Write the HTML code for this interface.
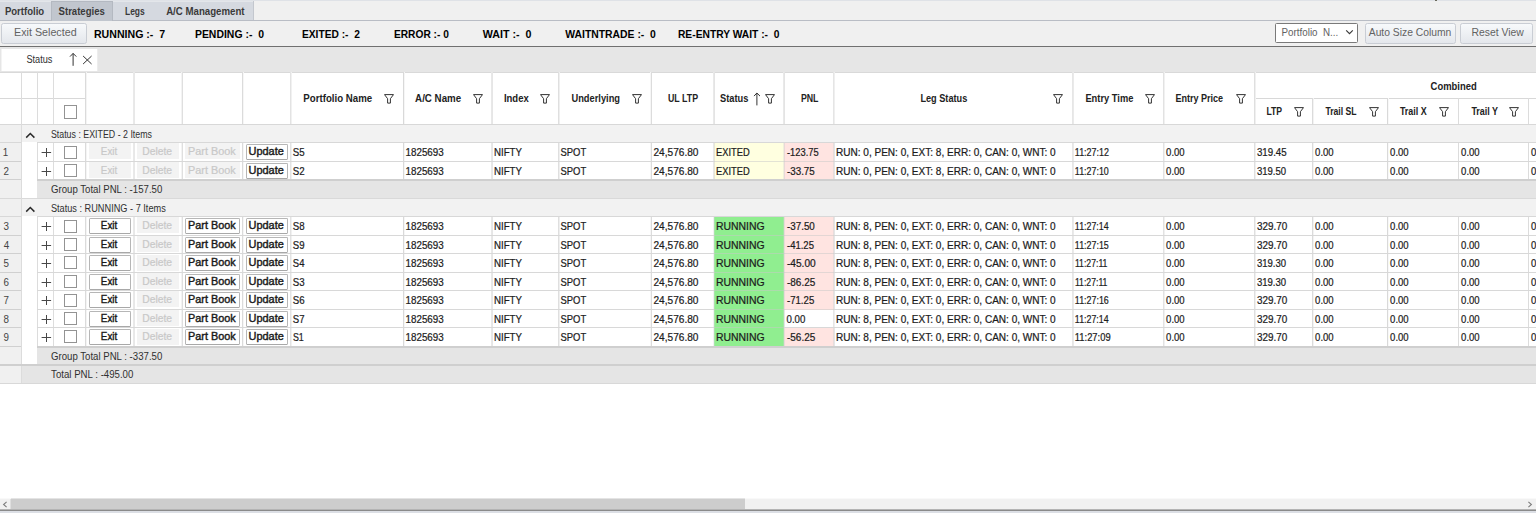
<!DOCTYPE html>
<html lang="en"><head><meta charset="utf-8"><title>Strategies</title><style>html,body{margin:0;padding:0}body{width:1536px;height:513px;overflow:hidden;background:#fff;position:relative;font-family:"Liberation Sans", sans-serif}body>div,body>span,body>svg{position:absolute;box-sizing:content-box}span{white-space:pre;line-height:16px;transform-origin:0 50%}.d{-webkit-text-stroke:0.22px currentColor}.gb{-webkit-text-stroke:0.4px currentColor}.gbd{-webkit-text-stroke:0.2px currentColor}.d{font-size:10.2px;font-weight:400;color:#1c1c1c}.h{font-size:10px;font-weight:700;color:#222222}.tab{font-size:10px;font-weight:700;color:#3a3a3a}.tb{font-size:10.8px;font-weight:700;color:#000000}.btn{font-size:10.6px;font-weight:400;color:#626262}.gb{font-size:10.4px;font-weight:400;color:#1a1a1a}.gbd{font-size:10.4px;font-weight:400;color:#c8c8c8}.g{font-size:10px;font-weight:400;color:#303030}.rn{font-size:10.2px;font-weight:400;color:#444444}</style></head><body>
<div style="left:0px;top:0px;width:1536px;height:21px;background:#f0f0f0;"></div>
<div style="left:0px;top:0px;width:1536px;height:1px;background:#dfe2e7;"></div>
<div style="left:0px;top:20px;width:1536px;height:1px;background:#b9bdc5;"></div>
<div style="left:0px;top:1px;width:254px;height:19px;background:#d5d9e0;"></div>
<div style="left:0px;top:1px;width:254px;height:1px;background:#e3e6ea;"></div>
<div style="left:51px;top:1px;width:62px;height:20px;background:#c1c6ce;"></div>
<div style="left:51px;top:1px;width:62px;height:1px;background:#b4b9c1;"></div>
<div style="left:51px;top:1px;width:1px;height:20px;background:#b4b9c1;"></div>
<div style="left:112px;top:1px;width:1px;height:20px;background:#b4b9c1;"></div>
<div style="left:253px;top:1px;width:1px;height:19px;background:#c3c7ce;"></div>
<div style="left:0px;top:21px;width:1536px;height:25px;background:#f0f0f0;"></div>
<div style="left:0px;top:46px;width:1536px;height:1px;background:#707070;"></div>
<div style="left:0px;top:47px;width:1536px;height:25px;background:#e6e6e6;"></div>
<div style="left:2px;top:49px;width:95px;height:22px;background:#ffffff;"></div>
<div style="left:1px;top:49px;width:1px;height:22px;background:#f3f3f3;"></div>
<div style="left:97px;top:49px;width:1px;height:22px;background:#ededed;"></div>
<div style="left:0px;top:72px;width:1536px;height:53px;background:#ffffff;"></div>
<div style="left:0px;top:124px;width:21px;height:19px;background:#f0f0f0;"></div>
<div style="left:21px;top:124px;width:1515px;height:19px;background:#f2f2f2;"></div>
<div style="left:0px;top:142px;width:21px;height:19px;background:#f0f0f0;"></div>
<div style="left:21px;top:142px;width:16px;height:19px;background:#ffffff;"></div>
<div style="left:37px;top:142px;width:1499px;height:19px;background:#ffffff;"></div>
<div style="left:88.5px;top:143px;width:42.0px;height:16px;background:#f3f3f3;"></div>
<div style="left:136.5px;top:143px;width:42.0px;height:16px;background:#f3f3f3;"></div>
<div style="left:185px;top:143px;width:54.5px;height:16px;background:#f3f3f3;"></div>
<div style="left:0px;top:161px;width:21px;height:19px;background:#f0f0f0;"></div>
<div style="left:21px;top:161px;width:16px;height:19px;background:#ffffff;"></div>
<div style="left:37px;top:161px;width:1499px;height:19px;background:#ffffff;"></div>
<div style="left:88.5px;top:162px;width:42.0px;height:16px;background:#f3f3f3;"></div>
<div style="left:136.5px;top:162px;width:42.0px;height:16px;background:#f3f3f3;"></div>
<div style="left:185px;top:162px;width:54.5px;height:16px;background:#f3f3f3;"></div>
<div style="left:37px;top:180px;width:1499px;height:19px;background:#e5e5e5;"></div>
<div style="left:0px;top:180px;width:21px;height:19px;background:#f0f0f0;"></div>
<div style="left:21px;top:180px;width:16px;height:19px;background:#ffffff;"></div>
<div style="left:0px;top:198px;width:21px;height:19px;background:#f0f0f0;"></div>
<div style="left:21px;top:198px;width:1515px;height:19px;background:#f2f2f2;"></div>
<div style="left:0px;top:216px;width:21px;height:19px;background:#f0f0f0;"></div>
<div style="left:21px;top:216px;width:16px;height:19px;background:#ffffff;"></div>
<div style="left:37px;top:216px;width:1499px;height:19px;background:#ffffff;"></div>
<div style="left:136.5px;top:217px;width:42.0px;height:16px;background:#f3f3f3;"></div>
<div style="left:0px;top:235px;width:21px;height:19px;background:#f0f0f0;"></div>
<div style="left:21px;top:235px;width:16px;height:19px;background:#ffffff;"></div>
<div style="left:37px;top:235px;width:1499px;height:19px;background:#ffffff;"></div>
<div style="left:136.5px;top:236px;width:42.0px;height:16px;background:#f3f3f3;"></div>
<div style="left:0px;top:254px;width:21px;height:19px;background:#f0f0f0;"></div>
<div style="left:21px;top:254px;width:16px;height:19px;background:#ffffff;"></div>
<div style="left:37px;top:254px;width:1499px;height:19px;background:#ffffff;"></div>
<div style="left:136.5px;top:255px;width:42.0px;height:16px;background:#f3f3f3;"></div>
<div style="left:0px;top:272px;width:21px;height:19px;background:#f0f0f0;"></div>
<div style="left:21px;top:272px;width:16px;height:19px;background:#ffffff;"></div>
<div style="left:37px;top:272px;width:1499px;height:19px;background:#ffffff;"></div>
<div style="left:136.5px;top:273px;width:42.0px;height:16px;background:#f3f3f3;"></div>
<div style="left:0px;top:290px;width:21px;height:19px;background:#f0f0f0;"></div>
<div style="left:21px;top:290px;width:16px;height:19px;background:#ffffff;"></div>
<div style="left:37px;top:290px;width:1499px;height:19px;background:#ffffff;"></div>
<div style="left:136.5px;top:291px;width:42.0px;height:16px;background:#f3f3f3;"></div>
<div style="left:0px;top:309px;width:21px;height:19px;background:#f0f0f0;"></div>
<div style="left:21px;top:309px;width:16px;height:19px;background:#ffffff;"></div>
<div style="left:37px;top:309px;width:1499px;height:19px;background:#ffffff;"></div>
<div style="left:136.5px;top:310px;width:42.0px;height:16px;background:#f3f3f3;"></div>
<div style="left:0px;top:328px;width:21px;height:19px;background:#f0f0f0;"></div>
<div style="left:21px;top:328px;width:16px;height:19px;background:#ffffff;"></div>
<div style="left:37px;top:328px;width:1499px;height:19px;background:#ffffff;"></div>
<div style="left:136.5px;top:329px;width:42.0px;height:16px;background:#f3f3f3;"></div>
<div style="left:37px;top:346px;width:1499px;height:19px;background:#e5e5e5;"></div>
<div style="left:0px;top:346px;width:21px;height:19px;background:#f0f0f0;"></div>
<div style="left:21px;top:346px;width:16px;height:19px;background:#ffffff;"></div>
<div style="left:21px;top:364px;width:1515px;height:19px;background:#e5e5e5;"></div>
<div style="left:0px;top:364px;width:21px;height:19px;background:#f0f0f0;"></div>
<div style="left:0px;top:498px;width:1536px;height:1px;background:#f9f9f9;"></div>
<div style="left:0px;top:499px;width:1536px;height:11px;background:#f1f1f1;"></div>
<div style="left:11px;top:498px;width:734px;height:1px;background:#e4e4e4;"></div>
<div style="left:11px;top:499px;width:734px;height:11px;background:#cdcdcd;"></div>
<div style="left:10px;top:499px;width:1px;height:11px;background:#dfdfdf;"></div>
<div style="left:0px;top:509px;width:1536px;height:1px;background:#b4b4b4;"></div>
<div style="left:0px;top:510px;width:1536px;height:1px;background:#8a8a8a;"></div>
<div style="left:0px;top:511px;width:1536px;height:2px;background:#dcdfe5;"></div>
<div style="left:1435px;top:0px;width:2px;height:1px;background:#6a6a5c;"></div>
<div style="left:0px;top:72px;width:1536px;height:1px;background:#d9d9d9;"></div>
<div style="left:0px;top:124px;width:1536px;height:1px;background:#d8d8d8;"></div>
<div style="left:0px;top:98px;width:85px;height:1px;background:#d8d8d8;"></div>
<div style="left:1254px;top:98px;width:282px;height:1px;background:#d8d8d8;"></div>
<div style="left:21px;top:72px;width:1px;height:52px;background:#dcdcdc;"></div>
<div style="left:37px;top:72px;width:1px;height:52px;background:#dcdcdc;"></div>
<div style="left:53px;top:72px;width:1px;height:52px;background:#dddddd;"></div>
<div style="left:85px;top:72px;width:1px;height:52px;background:#dbdbdb;"></div>
<div style="left:86px;top:72px;width:1px;height:52px;background:#f4f4f4;"></div>
<div style="left:133px;top:72px;width:1px;height:52px;background:#e9e9e9;"></div>
<div style="left:134px;top:72px;width:1px;height:52px;background:#e8e8e8;"></div>
<div style="left:181px;top:72px;width:1px;height:52px;background:#f3f3f3;"></div>
<div style="left:182px;top:72px;width:1px;height:52px;background:#dfdfdf;"></div>
<div style="left:242px;top:72px;width:1px;height:52px;background:#dbdbdb;"></div>
<div style="left:243px;top:72px;width:1px;height:52px;background:#f6f6f6;"></div>
<div style="left:290px;top:72px;width:1px;height:52px;background:#e3e3e3;"></div>
<div style="left:291px;top:72px;width:1px;height:52px;background:#f1f1f1;"></div>
<div style="left:403px;top:72px;width:1px;height:52px;background:#d9d9d9;"></div>
<div style="left:404px;top:72px;width:1px;height:52px;background:#f6f6f6;"></div>
<div style="left:491px;top:72px;width:1px;height:52px;background:#e8e8e8;"></div>
<div style="left:492px;top:72px;width:1px;height:52px;background:#e6e6e6;"></div>
<div style="left:558px;top:72px;width:1px;height:52px;background:#dfdfdf;"></div>
<div style="left:559px;top:72px;width:1px;height:52px;background:#efefef;"></div>
<div style="left:650px;top:72px;width:1px;height:52px;background:#f6f6f6;"></div>
<div style="left:651px;top:72px;width:1px;height:52px;background:#dcdcdc;"></div>
<div style="left:713px;top:72px;width:1px;height:52px;background:#e9e9e9;"></div>
<div style="left:714px;top:72px;width:1px;height:52px;background:#e4e4e4;"></div>
<div style="left:783px;top:72px;width:1px;height:52px;background:#e9e9e9;"></div>
<div style="left:784px;top:72px;width:1px;height:52px;background:#e4e4e4;"></div>
<div style="left:833px;top:72px;width:1px;height:52px;background:#e5e5e5;"></div>
<div style="left:834px;top:72px;width:1px;height:52px;background:#efefef;"></div>
<div style="left:1072px;top:72px;width:1px;height:52px;background:#e6e6e6;"></div>
<div style="left:1073px;top:72px;width:1px;height:52px;background:#eaeaea;"></div>
<div style="left:1163px;top:72px;width:1px;height:52px;background:#e2e2e2;"></div>
<div style="left:1164px;top:72px;width:1px;height:52px;background:#f1f1f1;"></div>
<div style="left:1254px;top:72px;width:1px;height:52px;background:#dfdfdf;"></div>
<div style="left:1255px;top:72px;width:1px;height:52px;background:#f0f0f0;"></div>
<div style="left:1312px;top:98px;width:1px;height:26px;background:#dbdbdb;"></div>
<div style="left:1313px;top:98px;width:1px;height:26px;background:#f3f3f3;"></div>
<div style="left:1387px;top:98px;width:1px;height:26px;background:#d9d9d9;"></div>
<div style="left:1388px;top:98px;width:1px;height:26px;background:#f8f8f8;"></div>
<div style="left:1458px;top:98px;width:1px;height:26px;background:#dcdcdc;"></div>
<div style="left:1528px;top:98px;width:1px;height:26px;background:#dcdcdc;"></div>
<div style="left:0px;top:142px;width:21px;height:1px;background:#d8d8d8;"></div>
<div style="left:37px;top:142px;width:1499px;height:1px;background:#d8d8d8;"></div>
<div style="left:0px;top:161px;width:21px;height:1px;background:#d0d0d0;"></div>
<div style="left:37px;top:161px;width:1499px;height:1px;background:#d8d8d8;"></div>
<div style="left:37px;top:143px;width:1px;height:18px;background:#dcdcdc;"></div>
<div style="left:53px;top:143px;width:1px;height:18px;background:#dddddd;"></div>
<div style="left:85px;top:143px;width:1px;height:18px;background:#dbdbdb;"></div>
<div style="left:86px;top:143px;width:1px;height:18px;background:#f4f4f4;"></div>
<div style="left:133px;top:143px;width:1px;height:18px;background:#e9e9e9;"></div>
<div style="left:134px;top:143px;width:1px;height:18px;background:#e8e8e8;"></div>
<div style="left:181px;top:143px;width:1px;height:18px;background:#f3f3f3;"></div>
<div style="left:182px;top:143px;width:1px;height:18px;background:#dfdfdf;"></div>
<div style="left:242px;top:143px;width:1px;height:18px;background:#dbdbdb;"></div>
<div style="left:243px;top:143px;width:1px;height:18px;background:#f6f6f6;"></div>
<div style="left:290px;top:143px;width:1px;height:18px;background:#e3e3e3;"></div>
<div style="left:291px;top:143px;width:1px;height:18px;background:#f1f1f1;"></div>
<div style="left:403px;top:143px;width:1px;height:18px;background:#d9d9d9;"></div>
<div style="left:404px;top:143px;width:1px;height:18px;background:#f6f6f6;"></div>
<div style="left:491px;top:143px;width:1px;height:18px;background:#e8e8e8;"></div>
<div style="left:492px;top:143px;width:1px;height:18px;background:#e6e6e6;"></div>
<div style="left:558px;top:143px;width:1px;height:18px;background:#dfdfdf;"></div>
<div style="left:559px;top:143px;width:1px;height:18px;background:#efefef;"></div>
<div style="left:650px;top:143px;width:1px;height:18px;background:#f6f6f6;"></div>
<div style="left:651px;top:143px;width:1px;height:18px;background:#dcdcdc;"></div>
<div style="left:713px;top:143px;width:1px;height:18px;background:#e9e9e9;"></div>
<div style="left:714px;top:143px;width:1px;height:18px;background:#e4e4e4;"></div>
<div style="left:783px;top:143px;width:1px;height:18px;background:#e9e9e9;"></div>
<div style="left:784px;top:143px;width:1px;height:18px;background:#e4e4e4;"></div>
<div style="left:833px;top:143px;width:1px;height:18px;background:#e5e5e5;"></div>
<div style="left:834px;top:143px;width:1px;height:18px;background:#efefef;"></div>
<div style="left:1072px;top:143px;width:1px;height:18px;background:#e6e6e6;"></div>
<div style="left:1073px;top:143px;width:1px;height:18px;background:#eaeaea;"></div>
<div style="left:1163px;top:143px;width:1px;height:18px;background:#e2e2e2;"></div>
<div style="left:1164px;top:143px;width:1px;height:18px;background:#f1f1f1;"></div>
<div style="left:1254px;top:143px;width:1px;height:18px;background:#dfdfdf;"></div>
<div style="left:1255px;top:143px;width:1px;height:18px;background:#f0f0f0;"></div>
<div style="left:1312px;top:143px;width:1px;height:18px;background:#dbdbdb;"></div>
<div style="left:1313px;top:143px;width:1px;height:18px;background:#f3f3f3;"></div>
<div style="left:1387px;top:143px;width:1px;height:18px;background:#d9d9d9;"></div>
<div style="left:1388px;top:143px;width:1px;height:18px;background:#f8f8f8;"></div>
<div style="left:1458px;top:143px;width:1px;height:18px;background:#dcdcdc;"></div>
<div style="left:1528px;top:143px;width:1px;height:18px;background:#dcdcdc;"></div>
<div style="left:0px;top:179px;width:21px;height:1px;background:#d0d0d0;"></div>
<div style="left:37px;top:179px;width:1499px;height:1px;background:#d8d8d8;"></div>
<div style="left:37px;top:162px;width:1px;height:17px;background:#dcdcdc;"></div>
<div style="left:53px;top:162px;width:1px;height:17px;background:#dddddd;"></div>
<div style="left:85px;top:162px;width:1px;height:17px;background:#dbdbdb;"></div>
<div style="left:86px;top:162px;width:1px;height:17px;background:#f4f4f4;"></div>
<div style="left:133px;top:162px;width:1px;height:17px;background:#e9e9e9;"></div>
<div style="left:134px;top:162px;width:1px;height:17px;background:#e8e8e8;"></div>
<div style="left:181px;top:162px;width:1px;height:17px;background:#f3f3f3;"></div>
<div style="left:182px;top:162px;width:1px;height:17px;background:#dfdfdf;"></div>
<div style="left:242px;top:162px;width:1px;height:17px;background:#dbdbdb;"></div>
<div style="left:243px;top:162px;width:1px;height:17px;background:#f6f6f6;"></div>
<div style="left:290px;top:162px;width:1px;height:17px;background:#e3e3e3;"></div>
<div style="left:291px;top:162px;width:1px;height:17px;background:#f1f1f1;"></div>
<div style="left:403px;top:162px;width:1px;height:17px;background:#d9d9d9;"></div>
<div style="left:404px;top:162px;width:1px;height:17px;background:#f6f6f6;"></div>
<div style="left:491px;top:162px;width:1px;height:17px;background:#e8e8e8;"></div>
<div style="left:492px;top:162px;width:1px;height:17px;background:#e6e6e6;"></div>
<div style="left:558px;top:162px;width:1px;height:17px;background:#dfdfdf;"></div>
<div style="left:559px;top:162px;width:1px;height:17px;background:#efefef;"></div>
<div style="left:650px;top:162px;width:1px;height:17px;background:#f6f6f6;"></div>
<div style="left:651px;top:162px;width:1px;height:17px;background:#dcdcdc;"></div>
<div style="left:713px;top:162px;width:1px;height:17px;background:#e9e9e9;"></div>
<div style="left:714px;top:162px;width:1px;height:17px;background:#e4e4e4;"></div>
<div style="left:783px;top:162px;width:1px;height:17px;background:#e9e9e9;"></div>
<div style="left:784px;top:162px;width:1px;height:17px;background:#e4e4e4;"></div>
<div style="left:833px;top:162px;width:1px;height:17px;background:#e5e5e5;"></div>
<div style="left:834px;top:162px;width:1px;height:17px;background:#efefef;"></div>
<div style="left:1072px;top:162px;width:1px;height:17px;background:#e6e6e6;"></div>
<div style="left:1073px;top:162px;width:1px;height:17px;background:#eaeaea;"></div>
<div style="left:1163px;top:162px;width:1px;height:17px;background:#e2e2e2;"></div>
<div style="left:1164px;top:162px;width:1px;height:17px;background:#f1f1f1;"></div>
<div style="left:1254px;top:162px;width:1px;height:17px;background:#dfdfdf;"></div>
<div style="left:1255px;top:162px;width:1px;height:17px;background:#f0f0f0;"></div>
<div style="left:1312px;top:162px;width:1px;height:17px;background:#dbdbdb;"></div>
<div style="left:1313px;top:162px;width:1px;height:17px;background:#f3f3f3;"></div>
<div style="left:1387px;top:162px;width:1px;height:17px;background:#d9d9d9;"></div>
<div style="left:1388px;top:162px;width:1px;height:17px;background:#f8f8f8;"></div>
<div style="left:1458px;top:162px;width:1px;height:17px;background:#dcdcdc;"></div>
<div style="left:1528px;top:162px;width:1px;height:17px;background:#dcdcdc;"></div>
<div style="left:0px;top:198px;width:1536px;height:1px;background:#d9d9d9;"></div>
<div style="left:0px;top:216px;width:21px;height:1px;background:#d8d8d8;"></div>
<div style="left:37px;top:216px;width:1499px;height:1px;background:#d8d8d8;"></div>
<div style="left:0px;top:235px;width:21px;height:1px;background:#d0d0d0;"></div>
<div style="left:37px;top:235px;width:1499px;height:1px;background:#d8d8d8;"></div>
<div style="left:37px;top:217px;width:1px;height:18px;background:#dcdcdc;"></div>
<div style="left:53px;top:217px;width:1px;height:18px;background:#dddddd;"></div>
<div style="left:85px;top:217px;width:1px;height:18px;background:#dbdbdb;"></div>
<div style="left:86px;top:217px;width:1px;height:18px;background:#f4f4f4;"></div>
<div style="left:133px;top:217px;width:1px;height:18px;background:#e9e9e9;"></div>
<div style="left:134px;top:217px;width:1px;height:18px;background:#e8e8e8;"></div>
<div style="left:181px;top:217px;width:1px;height:18px;background:#f3f3f3;"></div>
<div style="left:182px;top:217px;width:1px;height:18px;background:#dfdfdf;"></div>
<div style="left:242px;top:217px;width:1px;height:18px;background:#dbdbdb;"></div>
<div style="left:243px;top:217px;width:1px;height:18px;background:#f6f6f6;"></div>
<div style="left:290px;top:217px;width:1px;height:18px;background:#e3e3e3;"></div>
<div style="left:291px;top:217px;width:1px;height:18px;background:#f1f1f1;"></div>
<div style="left:403px;top:217px;width:1px;height:18px;background:#d9d9d9;"></div>
<div style="left:404px;top:217px;width:1px;height:18px;background:#f6f6f6;"></div>
<div style="left:491px;top:217px;width:1px;height:18px;background:#e8e8e8;"></div>
<div style="left:492px;top:217px;width:1px;height:18px;background:#e6e6e6;"></div>
<div style="left:558px;top:217px;width:1px;height:18px;background:#dfdfdf;"></div>
<div style="left:559px;top:217px;width:1px;height:18px;background:#efefef;"></div>
<div style="left:650px;top:217px;width:1px;height:18px;background:#f6f6f6;"></div>
<div style="left:651px;top:217px;width:1px;height:18px;background:#dcdcdc;"></div>
<div style="left:713px;top:217px;width:1px;height:18px;background:#e9e9e9;"></div>
<div style="left:714px;top:217px;width:1px;height:18px;background:#e4e4e4;"></div>
<div style="left:783px;top:217px;width:1px;height:18px;background:#e9e9e9;"></div>
<div style="left:784px;top:217px;width:1px;height:18px;background:#e4e4e4;"></div>
<div style="left:833px;top:217px;width:1px;height:18px;background:#e5e5e5;"></div>
<div style="left:834px;top:217px;width:1px;height:18px;background:#efefef;"></div>
<div style="left:1072px;top:217px;width:1px;height:18px;background:#e6e6e6;"></div>
<div style="left:1073px;top:217px;width:1px;height:18px;background:#eaeaea;"></div>
<div style="left:1163px;top:217px;width:1px;height:18px;background:#e2e2e2;"></div>
<div style="left:1164px;top:217px;width:1px;height:18px;background:#f1f1f1;"></div>
<div style="left:1254px;top:217px;width:1px;height:18px;background:#dfdfdf;"></div>
<div style="left:1255px;top:217px;width:1px;height:18px;background:#f0f0f0;"></div>
<div style="left:1312px;top:217px;width:1px;height:18px;background:#dbdbdb;"></div>
<div style="left:1313px;top:217px;width:1px;height:18px;background:#f3f3f3;"></div>
<div style="left:1387px;top:217px;width:1px;height:18px;background:#d9d9d9;"></div>
<div style="left:1388px;top:217px;width:1px;height:18px;background:#f8f8f8;"></div>
<div style="left:1458px;top:217px;width:1px;height:18px;background:#dcdcdc;"></div>
<div style="left:1528px;top:217px;width:1px;height:18px;background:#dcdcdc;"></div>
<div style="left:0px;top:253px;width:21px;height:1px;background:#d0d0d0;"></div>
<div style="left:37px;top:253px;width:1499px;height:1px;background:#d8d8d8;"></div>
<div style="left:37px;top:236px;width:1px;height:17px;background:#dcdcdc;"></div>
<div style="left:53px;top:236px;width:1px;height:17px;background:#dddddd;"></div>
<div style="left:85px;top:236px;width:1px;height:17px;background:#dbdbdb;"></div>
<div style="left:86px;top:236px;width:1px;height:17px;background:#f4f4f4;"></div>
<div style="left:133px;top:236px;width:1px;height:17px;background:#e9e9e9;"></div>
<div style="left:134px;top:236px;width:1px;height:17px;background:#e8e8e8;"></div>
<div style="left:181px;top:236px;width:1px;height:17px;background:#f3f3f3;"></div>
<div style="left:182px;top:236px;width:1px;height:17px;background:#dfdfdf;"></div>
<div style="left:242px;top:236px;width:1px;height:17px;background:#dbdbdb;"></div>
<div style="left:243px;top:236px;width:1px;height:17px;background:#f6f6f6;"></div>
<div style="left:290px;top:236px;width:1px;height:17px;background:#e3e3e3;"></div>
<div style="left:291px;top:236px;width:1px;height:17px;background:#f1f1f1;"></div>
<div style="left:403px;top:236px;width:1px;height:17px;background:#d9d9d9;"></div>
<div style="left:404px;top:236px;width:1px;height:17px;background:#f6f6f6;"></div>
<div style="left:491px;top:236px;width:1px;height:17px;background:#e8e8e8;"></div>
<div style="left:492px;top:236px;width:1px;height:17px;background:#e6e6e6;"></div>
<div style="left:558px;top:236px;width:1px;height:17px;background:#dfdfdf;"></div>
<div style="left:559px;top:236px;width:1px;height:17px;background:#efefef;"></div>
<div style="left:650px;top:236px;width:1px;height:17px;background:#f6f6f6;"></div>
<div style="left:651px;top:236px;width:1px;height:17px;background:#dcdcdc;"></div>
<div style="left:713px;top:236px;width:1px;height:17px;background:#e9e9e9;"></div>
<div style="left:714px;top:236px;width:1px;height:17px;background:#e4e4e4;"></div>
<div style="left:783px;top:236px;width:1px;height:17px;background:#e9e9e9;"></div>
<div style="left:784px;top:236px;width:1px;height:17px;background:#e4e4e4;"></div>
<div style="left:833px;top:236px;width:1px;height:17px;background:#e5e5e5;"></div>
<div style="left:834px;top:236px;width:1px;height:17px;background:#efefef;"></div>
<div style="left:1072px;top:236px;width:1px;height:17px;background:#e6e6e6;"></div>
<div style="left:1073px;top:236px;width:1px;height:17px;background:#eaeaea;"></div>
<div style="left:1163px;top:236px;width:1px;height:17px;background:#e2e2e2;"></div>
<div style="left:1164px;top:236px;width:1px;height:17px;background:#f1f1f1;"></div>
<div style="left:1254px;top:236px;width:1px;height:17px;background:#dfdfdf;"></div>
<div style="left:1255px;top:236px;width:1px;height:17px;background:#f0f0f0;"></div>
<div style="left:1312px;top:236px;width:1px;height:17px;background:#dbdbdb;"></div>
<div style="left:1313px;top:236px;width:1px;height:17px;background:#f3f3f3;"></div>
<div style="left:1387px;top:236px;width:1px;height:17px;background:#d9d9d9;"></div>
<div style="left:1388px;top:236px;width:1px;height:17px;background:#f8f8f8;"></div>
<div style="left:1458px;top:236px;width:1px;height:17px;background:#dcdcdc;"></div>
<div style="left:1528px;top:236px;width:1px;height:17px;background:#dcdcdc;"></div>
<div style="left:0px;top:272px;width:21px;height:1px;background:#d0d0d0;"></div>
<div style="left:37px;top:272px;width:1499px;height:1px;background:#d8d8d8;"></div>
<div style="left:37px;top:254px;width:1px;height:18px;background:#dcdcdc;"></div>
<div style="left:53px;top:254px;width:1px;height:18px;background:#dddddd;"></div>
<div style="left:85px;top:254px;width:1px;height:18px;background:#dbdbdb;"></div>
<div style="left:86px;top:254px;width:1px;height:18px;background:#f4f4f4;"></div>
<div style="left:133px;top:254px;width:1px;height:18px;background:#e9e9e9;"></div>
<div style="left:134px;top:254px;width:1px;height:18px;background:#e8e8e8;"></div>
<div style="left:181px;top:254px;width:1px;height:18px;background:#f3f3f3;"></div>
<div style="left:182px;top:254px;width:1px;height:18px;background:#dfdfdf;"></div>
<div style="left:242px;top:254px;width:1px;height:18px;background:#dbdbdb;"></div>
<div style="left:243px;top:254px;width:1px;height:18px;background:#f6f6f6;"></div>
<div style="left:290px;top:254px;width:1px;height:18px;background:#e3e3e3;"></div>
<div style="left:291px;top:254px;width:1px;height:18px;background:#f1f1f1;"></div>
<div style="left:403px;top:254px;width:1px;height:18px;background:#d9d9d9;"></div>
<div style="left:404px;top:254px;width:1px;height:18px;background:#f6f6f6;"></div>
<div style="left:491px;top:254px;width:1px;height:18px;background:#e8e8e8;"></div>
<div style="left:492px;top:254px;width:1px;height:18px;background:#e6e6e6;"></div>
<div style="left:558px;top:254px;width:1px;height:18px;background:#dfdfdf;"></div>
<div style="left:559px;top:254px;width:1px;height:18px;background:#efefef;"></div>
<div style="left:650px;top:254px;width:1px;height:18px;background:#f6f6f6;"></div>
<div style="left:651px;top:254px;width:1px;height:18px;background:#dcdcdc;"></div>
<div style="left:713px;top:254px;width:1px;height:18px;background:#e9e9e9;"></div>
<div style="left:714px;top:254px;width:1px;height:18px;background:#e4e4e4;"></div>
<div style="left:783px;top:254px;width:1px;height:18px;background:#e9e9e9;"></div>
<div style="left:784px;top:254px;width:1px;height:18px;background:#e4e4e4;"></div>
<div style="left:833px;top:254px;width:1px;height:18px;background:#e5e5e5;"></div>
<div style="left:834px;top:254px;width:1px;height:18px;background:#efefef;"></div>
<div style="left:1072px;top:254px;width:1px;height:18px;background:#e6e6e6;"></div>
<div style="left:1073px;top:254px;width:1px;height:18px;background:#eaeaea;"></div>
<div style="left:1163px;top:254px;width:1px;height:18px;background:#e2e2e2;"></div>
<div style="left:1164px;top:254px;width:1px;height:18px;background:#f1f1f1;"></div>
<div style="left:1254px;top:254px;width:1px;height:18px;background:#dfdfdf;"></div>
<div style="left:1255px;top:254px;width:1px;height:18px;background:#f0f0f0;"></div>
<div style="left:1312px;top:254px;width:1px;height:18px;background:#dbdbdb;"></div>
<div style="left:1313px;top:254px;width:1px;height:18px;background:#f3f3f3;"></div>
<div style="left:1387px;top:254px;width:1px;height:18px;background:#d9d9d9;"></div>
<div style="left:1388px;top:254px;width:1px;height:18px;background:#f8f8f8;"></div>
<div style="left:1458px;top:254px;width:1px;height:18px;background:#dcdcdc;"></div>
<div style="left:1528px;top:254px;width:1px;height:18px;background:#dcdcdc;"></div>
<div style="left:0px;top:290px;width:21px;height:1px;background:#d0d0d0;"></div>
<div style="left:37px;top:290px;width:1499px;height:1px;background:#d8d8d8;"></div>
<div style="left:37px;top:273px;width:1px;height:17px;background:#dcdcdc;"></div>
<div style="left:53px;top:273px;width:1px;height:17px;background:#dddddd;"></div>
<div style="left:85px;top:273px;width:1px;height:17px;background:#dbdbdb;"></div>
<div style="left:86px;top:273px;width:1px;height:17px;background:#f4f4f4;"></div>
<div style="left:133px;top:273px;width:1px;height:17px;background:#e9e9e9;"></div>
<div style="left:134px;top:273px;width:1px;height:17px;background:#e8e8e8;"></div>
<div style="left:181px;top:273px;width:1px;height:17px;background:#f3f3f3;"></div>
<div style="left:182px;top:273px;width:1px;height:17px;background:#dfdfdf;"></div>
<div style="left:242px;top:273px;width:1px;height:17px;background:#dbdbdb;"></div>
<div style="left:243px;top:273px;width:1px;height:17px;background:#f6f6f6;"></div>
<div style="left:290px;top:273px;width:1px;height:17px;background:#e3e3e3;"></div>
<div style="left:291px;top:273px;width:1px;height:17px;background:#f1f1f1;"></div>
<div style="left:403px;top:273px;width:1px;height:17px;background:#d9d9d9;"></div>
<div style="left:404px;top:273px;width:1px;height:17px;background:#f6f6f6;"></div>
<div style="left:491px;top:273px;width:1px;height:17px;background:#e8e8e8;"></div>
<div style="left:492px;top:273px;width:1px;height:17px;background:#e6e6e6;"></div>
<div style="left:558px;top:273px;width:1px;height:17px;background:#dfdfdf;"></div>
<div style="left:559px;top:273px;width:1px;height:17px;background:#efefef;"></div>
<div style="left:650px;top:273px;width:1px;height:17px;background:#f6f6f6;"></div>
<div style="left:651px;top:273px;width:1px;height:17px;background:#dcdcdc;"></div>
<div style="left:713px;top:273px;width:1px;height:17px;background:#e9e9e9;"></div>
<div style="left:714px;top:273px;width:1px;height:17px;background:#e4e4e4;"></div>
<div style="left:783px;top:273px;width:1px;height:17px;background:#e9e9e9;"></div>
<div style="left:784px;top:273px;width:1px;height:17px;background:#e4e4e4;"></div>
<div style="left:833px;top:273px;width:1px;height:17px;background:#e5e5e5;"></div>
<div style="left:834px;top:273px;width:1px;height:17px;background:#efefef;"></div>
<div style="left:1072px;top:273px;width:1px;height:17px;background:#e6e6e6;"></div>
<div style="left:1073px;top:273px;width:1px;height:17px;background:#eaeaea;"></div>
<div style="left:1163px;top:273px;width:1px;height:17px;background:#e2e2e2;"></div>
<div style="left:1164px;top:273px;width:1px;height:17px;background:#f1f1f1;"></div>
<div style="left:1254px;top:273px;width:1px;height:17px;background:#dfdfdf;"></div>
<div style="left:1255px;top:273px;width:1px;height:17px;background:#f0f0f0;"></div>
<div style="left:1312px;top:273px;width:1px;height:17px;background:#dbdbdb;"></div>
<div style="left:1313px;top:273px;width:1px;height:17px;background:#f3f3f3;"></div>
<div style="left:1387px;top:273px;width:1px;height:17px;background:#d9d9d9;"></div>
<div style="left:1388px;top:273px;width:1px;height:17px;background:#f8f8f8;"></div>
<div style="left:1458px;top:273px;width:1px;height:17px;background:#dcdcdc;"></div>
<div style="left:1528px;top:273px;width:1px;height:17px;background:#dcdcdc;"></div>
<div style="left:0px;top:309px;width:21px;height:1px;background:#d0d0d0;"></div>
<div style="left:37px;top:309px;width:1499px;height:1px;background:#d8d8d8;"></div>
<div style="left:37px;top:291px;width:1px;height:18px;background:#dcdcdc;"></div>
<div style="left:53px;top:291px;width:1px;height:18px;background:#dddddd;"></div>
<div style="left:85px;top:291px;width:1px;height:18px;background:#dbdbdb;"></div>
<div style="left:86px;top:291px;width:1px;height:18px;background:#f4f4f4;"></div>
<div style="left:133px;top:291px;width:1px;height:18px;background:#e9e9e9;"></div>
<div style="left:134px;top:291px;width:1px;height:18px;background:#e8e8e8;"></div>
<div style="left:181px;top:291px;width:1px;height:18px;background:#f3f3f3;"></div>
<div style="left:182px;top:291px;width:1px;height:18px;background:#dfdfdf;"></div>
<div style="left:242px;top:291px;width:1px;height:18px;background:#dbdbdb;"></div>
<div style="left:243px;top:291px;width:1px;height:18px;background:#f6f6f6;"></div>
<div style="left:290px;top:291px;width:1px;height:18px;background:#e3e3e3;"></div>
<div style="left:291px;top:291px;width:1px;height:18px;background:#f1f1f1;"></div>
<div style="left:403px;top:291px;width:1px;height:18px;background:#d9d9d9;"></div>
<div style="left:404px;top:291px;width:1px;height:18px;background:#f6f6f6;"></div>
<div style="left:491px;top:291px;width:1px;height:18px;background:#e8e8e8;"></div>
<div style="left:492px;top:291px;width:1px;height:18px;background:#e6e6e6;"></div>
<div style="left:558px;top:291px;width:1px;height:18px;background:#dfdfdf;"></div>
<div style="left:559px;top:291px;width:1px;height:18px;background:#efefef;"></div>
<div style="left:650px;top:291px;width:1px;height:18px;background:#f6f6f6;"></div>
<div style="left:651px;top:291px;width:1px;height:18px;background:#dcdcdc;"></div>
<div style="left:713px;top:291px;width:1px;height:18px;background:#e9e9e9;"></div>
<div style="left:714px;top:291px;width:1px;height:18px;background:#e4e4e4;"></div>
<div style="left:783px;top:291px;width:1px;height:18px;background:#e9e9e9;"></div>
<div style="left:784px;top:291px;width:1px;height:18px;background:#e4e4e4;"></div>
<div style="left:833px;top:291px;width:1px;height:18px;background:#e5e5e5;"></div>
<div style="left:834px;top:291px;width:1px;height:18px;background:#efefef;"></div>
<div style="left:1072px;top:291px;width:1px;height:18px;background:#e6e6e6;"></div>
<div style="left:1073px;top:291px;width:1px;height:18px;background:#eaeaea;"></div>
<div style="left:1163px;top:291px;width:1px;height:18px;background:#e2e2e2;"></div>
<div style="left:1164px;top:291px;width:1px;height:18px;background:#f1f1f1;"></div>
<div style="left:1254px;top:291px;width:1px;height:18px;background:#dfdfdf;"></div>
<div style="left:1255px;top:291px;width:1px;height:18px;background:#f0f0f0;"></div>
<div style="left:1312px;top:291px;width:1px;height:18px;background:#dbdbdb;"></div>
<div style="left:1313px;top:291px;width:1px;height:18px;background:#f3f3f3;"></div>
<div style="left:1387px;top:291px;width:1px;height:18px;background:#d9d9d9;"></div>
<div style="left:1388px;top:291px;width:1px;height:18px;background:#f8f8f8;"></div>
<div style="left:1458px;top:291px;width:1px;height:18px;background:#dcdcdc;"></div>
<div style="left:1528px;top:291px;width:1px;height:18px;background:#dcdcdc;"></div>
<div style="left:0px;top:327px;width:21px;height:1px;background:#d0d0d0;"></div>
<div style="left:37px;top:327px;width:1499px;height:1px;background:#d8d8d8;"></div>
<div style="left:37px;top:310px;width:1px;height:17px;background:#dcdcdc;"></div>
<div style="left:53px;top:310px;width:1px;height:17px;background:#dddddd;"></div>
<div style="left:85px;top:310px;width:1px;height:17px;background:#dbdbdb;"></div>
<div style="left:86px;top:310px;width:1px;height:17px;background:#f4f4f4;"></div>
<div style="left:133px;top:310px;width:1px;height:17px;background:#e9e9e9;"></div>
<div style="left:134px;top:310px;width:1px;height:17px;background:#e8e8e8;"></div>
<div style="left:181px;top:310px;width:1px;height:17px;background:#f3f3f3;"></div>
<div style="left:182px;top:310px;width:1px;height:17px;background:#dfdfdf;"></div>
<div style="left:242px;top:310px;width:1px;height:17px;background:#dbdbdb;"></div>
<div style="left:243px;top:310px;width:1px;height:17px;background:#f6f6f6;"></div>
<div style="left:290px;top:310px;width:1px;height:17px;background:#e3e3e3;"></div>
<div style="left:291px;top:310px;width:1px;height:17px;background:#f1f1f1;"></div>
<div style="left:403px;top:310px;width:1px;height:17px;background:#d9d9d9;"></div>
<div style="left:404px;top:310px;width:1px;height:17px;background:#f6f6f6;"></div>
<div style="left:491px;top:310px;width:1px;height:17px;background:#e8e8e8;"></div>
<div style="left:492px;top:310px;width:1px;height:17px;background:#e6e6e6;"></div>
<div style="left:558px;top:310px;width:1px;height:17px;background:#dfdfdf;"></div>
<div style="left:559px;top:310px;width:1px;height:17px;background:#efefef;"></div>
<div style="left:650px;top:310px;width:1px;height:17px;background:#f6f6f6;"></div>
<div style="left:651px;top:310px;width:1px;height:17px;background:#dcdcdc;"></div>
<div style="left:713px;top:310px;width:1px;height:17px;background:#e9e9e9;"></div>
<div style="left:714px;top:310px;width:1px;height:17px;background:#e4e4e4;"></div>
<div style="left:783px;top:310px;width:1px;height:17px;background:#e9e9e9;"></div>
<div style="left:784px;top:310px;width:1px;height:17px;background:#e4e4e4;"></div>
<div style="left:833px;top:310px;width:1px;height:17px;background:#e5e5e5;"></div>
<div style="left:834px;top:310px;width:1px;height:17px;background:#efefef;"></div>
<div style="left:1072px;top:310px;width:1px;height:17px;background:#e6e6e6;"></div>
<div style="left:1073px;top:310px;width:1px;height:17px;background:#eaeaea;"></div>
<div style="left:1163px;top:310px;width:1px;height:17px;background:#e2e2e2;"></div>
<div style="left:1164px;top:310px;width:1px;height:17px;background:#f1f1f1;"></div>
<div style="left:1254px;top:310px;width:1px;height:17px;background:#dfdfdf;"></div>
<div style="left:1255px;top:310px;width:1px;height:17px;background:#f0f0f0;"></div>
<div style="left:1312px;top:310px;width:1px;height:17px;background:#dbdbdb;"></div>
<div style="left:1313px;top:310px;width:1px;height:17px;background:#f3f3f3;"></div>
<div style="left:1387px;top:310px;width:1px;height:17px;background:#d9d9d9;"></div>
<div style="left:1388px;top:310px;width:1px;height:17px;background:#f8f8f8;"></div>
<div style="left:1458px;top:310px;width:1px;height:17px;background:#dcdcdc;"></div>
<div style="left:1528px;top:310px;width:1px;height:17px;background:#dcdcdc;"></div>
<div style="left:0px;top:346px;width:21px;height:1px;background:#d0d0d0;"></div>
<div style="left:37px;top:346px;width:1499px;height:1px;background:#d8d8d8;"></div>
<div style="left:37px;top:328px;width:1px;height:18px;background:#dcdcdc;"></div>
<div style="left:53px;top:328px;width:1px;height:18px;background:#dddddd;"></div>
<div style="left:85px;top:328px;width:1px;height:18px;background:#dbdbdb;"></div>
<div style="left:86px;top:328px;width:1px;height:18px;background:#f4f4f4;"></div>
<div style="left:133px;top:328px;width:1px;height:18px;background:#e9e9e9;"></div>
<div style="left:134px;top:328px;width:1px;height:18px;background:#e8e8e8;"></div>
<div style="left:181px;top:328px;width:1px;height:18px;background:#f3f3f3;"></div>
<div style="left:182px;top:328px;width:1px;height:18px;background:#dfdfdf;"></div>
<div style="left:242px;top:328px;width:1px;height:18px;background:#dbdbdb;"></div>
<div style="left:243px;top:328px;width:1px;height:18px;background:#f6f6f6;"></div>
<div style="left:290px;top:328px;width:1px;height:18px;background:#e3e3e3;"></div>
<div style="left:291px;top:328px;width:1px;height:18px;background:#f1f1f1;"></div>
<div style="left:403px;top:328px;width:1px;height:18px;background:#d9d9d9;"></div>
<div style="left:404px;top:328px;width:1px;height:18px;background:#f6f6f6;"></div>
<div style="left:491px;top:328px;width:1px;height:18px;background:#e8e8e8;"></div>
<div style="left:492px;top:328px;width:1px;height:18px;background:#e6e6e6;"></div>
<div style="left:558px;top:328px;width:1px;height:18px;background:#dfdfdf;"></div>
<div style="left:559px;top:328px;width:1px;height:18px;background:#efefef;"></div>
<div style="left:650px;top:328px;width:1px;height:18px;background:#f6f6f6;"></div>
<div style="left:651px;top:328px;width:1px;height:18px;background:#dcdcdc;"></div>
<div style="left:713px;top:328px;width:1px;height:18px;background:#e9e9e9;"></div>
<div style="left:714px;top:328px;width:1px;height:18px;background:#e4e4e4;"></div>
<div style="left:783px;top:328px;width:1px;height:18px;background:#e9e9e9;"></div>
<div style="left:784px;top:328px;width:1px;height:18px;background:#e4e4e4;"></div>
<div style="left:833px;top:328px;width:1px;height:18px;background:#e5e5e5;"></div>
<div style="left:834px;top:328px;width:1px;height:18px;background:#efefef;"></div>
<div style="left:1072px;top:328px;width:1px;height:18px;background:#e6e6e6;"></div>
<div style="left:1073px;top:328px;width:1px;height:18px;background:#eaeaea;"></div>
<div style="left:1163px;top:328px;width:1px;height:18px;background:#e2e2e2;"></div>
<div style="left:1164px;top:328px;width:1px;height:18px;background:#f1f1f1;"></div>
<div style="left:1254px;top:328px;width:1px;height:18px;background:#dfdfdf;"></div>
<div style="left:1255px;top:328px;width:1px;height:18px;background:#f0f0f0;"></div>
<div style="left:1312px;top:328px;width:1px;height:18px;background:#dbdbdb;"></div>
<div style="left:1313px;top:328px;width:1px;height:18px;background:#f3f3f3;"></div>
<div style="left:1387px;top:328px;width:1px;height:18px;background:#d9d9d9;"></div>
<div style="left:1388px;top:328px;width:1px;height:18px;background:#f8f8f8;"></div>
<div style="left:1458px;top:328px;width:1px;height:18px;background:#dcdcdc;"></div>
<div style="left:1528px;top:328px;width:1px;height:18px;background:#dcdcdc;"></div>
<div style="left:0px;top:383px;width:1536px;height:1px;background:#d8d8d8;"></div>
<div style="left:21px;top:124px;width:1px;height:259px;background:#dcdcdc;"></div>
<div style="left:713px;top:143px;width:1px;height:18px;background:#e8e8e8"></div>
<div style="left:714px;top:143px;width:1px;height:19px;background:#e8e8d6"></div>
<div style="left:715px;top:143px;width:68px;height:19px;background:#ffffe0"></div>
<div style="left:783px;top:143px;width:1px;height:19px;background:#f0f0dc"></div>
<div style="left:784px;top:143px;width:1px;height:19px;background:#e9d9d8"></div>
<div style="left:785px;top:143px;width:48px;height:19px;background:#ffe4e1"></div>
<div style="left:833px;top:143px;width:1px;height:19px;background:#e8dcdb"></div>
<div style="left:834px;top:143px;width:1px;height:18px;background:#e5e6e6"></div>
<div style="left:714px;top:161px;width:120px;height:1px;background:rgba(200,200,200,0.5)"></div>
<div style="left:713px;top:162px;width:1px;height:17px;background:#e8e8e8"></div>
<div style="left:714px;top:162px;width:1px;height:18px;background:#e8e8d6"></div>
<div style="left:715px;top:162px;width:68px;height:18px;background:#ffffe0"></div>
<div style="left:783px;top:162px;width:1px;height:18px;background:#f0f0dc"></div>
<div style="left:784px;top:162px;width:1px;height:18px;background:#e9d9d8"></div>
<div style="left:785px;top:162px;width:48px;height:18px;background:#ffe4e1"></div>
<div style="left:833px;top:162px;width:1px;height:18px;background:#e8dcdb"></div>
<div style="left:834px;top:162px;width:1px;height:17px;background:#e5e6e6"></div>
<div style="left:713px;top:179px;width:122px;height:1px;background:#d4d4d4"></div>
<div style="left:37px;top:179px;width:1499px;height:2px;background:#cfcfcf"></div>
<div style="left:713px;top:217px;width:1px;height:18px;background:#f1f0f2"></div>
<div style="left:714px;top:217px;width:1px;height:19px;background:#a6e6a6"></div>
<div style="left:715px;top:217px;width:68px;height:19px;background:#90ee90"></div>
<div style="left:783px;top:217px;width:1px;height:19px;background:#a6e5a6"></div>
<div style="left:784px;top:217px;width:1px;height:19px;background:#e9d9d8"></div>
<div style="left:785px;top:217px;width:48px;height:19px;background:#ffe4e1"></div>
<div style="left:833px;top:217px;width:1px;height:19px;background:#e8dcdb"></div>
<div style="left:834px;top:217px;width:1px;height:18px;background:#e5e6e6"></div>
<div style="left:714px;top:235px;width:120px;height:1px;background:rgba(200,200,200,0.5)"></div>
<div style="left:713px;top:236px;width:1px;height:17px;background:#f1f0f2"></div>
<div style="left:714px;top:236px;width:1px;height:18px;background:#a6e6a6"></div>
<div style="left:715px;top:236px;width:68px;height:18px;background:#90ee90"></div>
<div style="left:783px;top:236px;width:1px;height:18px;background:#a6e5a6"></div>
<div style="left:784px;top:236px;width:1px;height:18px;background:#e9d9d8"></div>
<div style="left:785px;top:236px;width:48px;height:18px;background:#ffe4e1"></div>
<div style="left:833px;top:236px;width:1px;height:18px;background:#e8dcdb"></div>
<div style="left:834px;top:236px;width:1px;height:17px;background:#e5e6e6"></div>
<div style="left:714px;top:253px;width:120px;height:1px;background:rgba(200,200,200,0.5)"></div>
<div style="left:713px;top:254px;width:1px;height:18px;background:#f1f0f2"></div>
<div style="left:714px;top:254px;width:1px;height:19px;background:#a6e6a6"></div>
<div style="left:715px;top:254px;width:68px;height:19px;background:#90ee90"></div>
<div style="left:783px;top:254px;width:1px;height:19px;background:#a6e5a6"></div>
<div style="left:784px;top:254px;width:1px;height:19px;background:#e9d9d8"></div>
<div style="left:785px;top:254px;width:48px;height:19px;background:#ffe4e1"></div>
<div style="left:833px;top:254px;width:1px;height:19px;background:#e8dcdb"></div>
<div style="left:834px;top:254px;width:1px;height:18px;background:#e5e6e6"></div>
<div style="left:714px;top:272px;width:120px;height:1px;background:rgba(200,200,200,0.5)"></div>
<div style="left:713px;top:273px;width:1px;height:17px;background:#f1f0f2"></div>
<div style="left:714px;top:273px;width:1px;height:18px;background:#a6e6a6"></div>
<div style="left:715px;top:273px;width:68px;height:18px;background:#90ee90"></div>
<div style="left:783px;top:273px;width:1px;height:18px;background:#a6e5a6"></div>
<div style="left:784px;top:273px;width:1px;height:18px;background:#e9d9d8"></div>
<div style="left:785px;top:273px;width:48px;height:18px;background:#ffe4e1"></div>
<div style="left:833px;top:273px;width:1px;height:18px;background:#e8dcdb"></div>
<div style="left:834px;top:273px;width:1px;height:17px;background:#e5e6e6"></div>
<div style="left:714px;top:290px;width:120px;height:1px;background:rgba(200,200,200,0.5)"></div>
<div style="left:713px;top:291px;width:1px;height:18px;background:#f1f0f2"></div>
<div style="left:714px;top:291px;width:1px;height:19px;background:#a6e6a6"></div>
<div style="left:715px;top:291px;width:68px;height:19px;background:#90ee90"></div>
<div style="left:783px;top:291px;width:1px;height:19px;background:#a6e5a6"></div>
<div style="left:784px;top:291px;width:1px;height:19px;background:#e9d9d8"></div>
<div style="left:785px;top:291px;width:48px;height:19px;background:#ffe4e1"></div>
<div style="left:833px;top:291px;width:1px;height:19px;background:#e8dcdb"></div>
<div style="left:834px;top:291px;width:1px;height:18px;background:#e5e6e6"></div>
<div style="left:714px;top:309px;width:120px;height:1px;background:rgba(200,200,200,0.5)"></div>
<div style="left:713px;top:310px;width:1px;height:17px;background:#f1f0f2"></div>
<div style="left:714px;top:310px;width:1px;height:18px;background:#a6e6a6"></div>
<div style="left:715px;top:310px;width:68px;height:18px;background:#90ee90"></div>
<div style="left:783px;top:310px;width:1px;height:18px;background:#a6e5a6"></div>
<div style="left:714px;top:327px;width:70px;height:1px;background:rgba(200,200,200,0.5)"></div>
<div style="left:713px;top:328px;width:1px;height:18px;background:#f1f0f2"></div>
<div style="left:714px;top:328px;width:1px;height:19px;background:#a6e6a6"></div>
<div style="left:715px;top:328px;width:68px;height:19px;background:#90ee90"></div>
<div style="left:783px;top:328px;width:1px;height:19px;background:#a6e5a6"></div>
<div style="left:784px;top:328px;width:1px;height:19px;background:#e9d9d8"></div>
<div style="left:785px;top:328px;width:48px;height:19px;background:#ffe4e1"></div>
<div style="left:833px;top:328px;width:1px;height:19px;background:#e8dcdb"></div>
<div style="left:834px;top:328px;width:1px;height:18px;background:#e5e6e6"></div>
<div style="left:713px;top:346px;width:122px;height:1px;background:#d4d4d4"></div>
<div style="left:37px;top:346px;width:1499px;height:2px;background:#cfcfcf"></div>
<div style="left:0px;top:364px;width:1536px;height:2px;background:#cfcfcf"></div>
<svg style="left:384px;top:94px" width="10" height="10" viewBox="0 0 10 10"><path d="M0.5 0.6H9.5L6.4 4.7V9.1H3.6V4.7Z" fill="#fff" stroke="#333" stroke-width="1" stroke-linejoin="round"/></svg>
<svg style="left:473px;top:94px" width="10" height="10" viewBox="0 0 10 10"><path d="M0.5 0.6H9.5L6.4 4.7V9.1H3.6V4.7Z" fill="#fff" stroke="#333" stroke-width="1" stroke-linejoin="round"/></svg>
<svg style="left:540px;top:94px" width="10" height="10" viewBox="0 0 10 10"><path d="M0.5 0.6H9.5L6.4 4.7V9.1H3.6V4.7Z" fill="#fff" stroke="#333" stroke-width="1" stroke-linejoin="round"/></svg>
<svg style="left:632px;top:94px" width="10" height="10" viewBox="0 0 10 10"><path d="M0.5 0.6H9.5L6.4 4.7V9.1H3.6V4.7Z" fill="#fff" stroke="#333" stroke-width="1" stroke-linejoin="round"/></svg>
<svg style="left:765px;top:94px" width="10" height="10" viewBox="0 0 10 10"><path d="M0.5 0.6H9.5L6.4 4.7V9.1H3.6V4.7Z" fill="#fff" stroke="#333" stroke-width="1" stroke-linejoin="round"/></svg>
<svg style="left:1053px;top:94px" width="10" height="10" viewBox="0 0 10 10"><path d="M0.5 0.6H9.5L6.4 4.7V9.1H3.6V4.7Z" fill="#fff" stroke="#333" stroke-width="1" stroke-linejoin="round"/></svg>
<svg style="left:1145px;top:94px" width="10" height="10" viewBox="0 0 10 10"><path d="M0.5 0.6H9.5L6.4 4.7V9.1H3.6V4.7Z" fill="#fff" stroke="#333" stroke-width="1" stroke-linejoin="round"/></svg>
<svg style="left:1236px;top:94px" width="10" height="10" viewBox="0 0 10 10"><path d="M0.5 0.6H9.5L6.4 4.7V9.1H3.6V4.7Z" fill="#fff" stroke="#333" stroke-width="1" stroke-linejoin="round"/></svg>
<svg style="left:1294px;top:107px" width="10" height="10" viewBox="0 0 10 10"><path d="M0.5 0.6H9.5L6.4 4.7V9.1H3.6V4.7Z" fill="#fff" stroke="#333" stroke-width="1" stroke-linejoin="round"/></svg>
<svg style="left:1369px;top:107px" width="10" height="10" viewBox="0 0 10 10"><path d="M0.5 0.6H9.5L6.4 4.7V9.1H3.6V4.7Z" fill="#fff" stroke="#333" stroke-width="1" stroke-linejoin="round"/></svg>
<svg style="left:1439px;top:107px" width="10" height="10" viewBox="0 0 10 10"><path d="M0.5 0.6H9.5L6.4 4.7V9.1H3.6V4.7Z" fill="#fff" stroke="#333" stroke-width="1" stroke-linejoin="round"/></svg>
<svg style="left:1509px;top:107px" width="10" height="10" viewBox="0 0 10 10"><path d="M0.5 0.6H9.5L6.4 4.7V9.1H3.6V4.7Z" fill="#fff" stroke="#333" stroke-width="1" stroke-linejoin="round"/></svg>
<div style="left:64px;top:105px;width:11px;height:12px;background:#fff;border:1px solid #939393"></div>
<svg style="left:24px;top:131.0px" width="13" height="9" viewBox="0 0 13 9"><path d="M2.2 6.6L6.3 2.5L10.4 6.6" fill="none" stroke="#2b2b2b" stroke-width="1.5"/></svg>
<svg style="left:41px;top:147px" width="11" height="11" viewBox="0 0 11 11"><path d="M0.6 5.5H10.1M5.5 1V10" stroke="#484848" stroke-width="1" fill="none"/></svg>
<div style="left:64px;top:146px;width:11px;height:11px;background:#fff;border:1px solid #939393"></div>
<div style="left:245.5px;top:144.0px;width:40.0px;height:14px;background:#fff;border:1px solid #b6b6b6;border-bottom-color:#a8a8a8;border-radius:1.5px"></div>
<svg style="left:41px;top:166px" width="11" height="11" viewBox="0 0 11 11"><path d="M0.6 5.5H10.1M5.5 1V10" stroke="#484848" stroke-width="1" fill="none"/></svg>
<div style="left:64px;top:164px;width:11px;height:11px;background:#fff;border:1px solid #939393"></div>
<div style="left:245.5px;top:162.5px;width:40.0px;height:14px;background:#fff;border:1px solid #b6b6b6;border-bottom-color:#a8a8a8;border-radius:1.5px"></div>
<svg style="left:24px;top:205.0px" width="13" height="9" viewBox="0 0 13 9"><path d="M2.2 6.6L6.3 2.5L10.4 6.6" fill="none" stroke="#2b2b2b" stroke-width="1.5"/></svg>
<svg style="left:41px;top:221px" width="11" height="11" viewBox="0 0 11 11"><path d="M0.6 5.5H10.1M5.5 1V10" stroke="#484848" stroke-width="1" fill="none"/></svg>
<div style="left:64px;top:220px;width:11px;height:11px;background:#fff;border:1px solid #939393"></div>
<div style="left:88.5px;top:218.0px;width:40.0px;height:14px;background:#fff;border:1px solid #b6b6b6;border-bottom-color:#a8a8a8;border-radius:1.5px"></div>
<div style="left:185px;top:218.0px;width:52.5px;height:14px;background:#fff;border:1px solid #b6b6b6;border-bottom-color:#a8a8a8;border-radius:1.5px"></div>
<div style="left:245.5px;top:218.0px;width:40.0px;height:14px;background:#fff;border:1px solid #b6b6b6;border-bottom-color:#a8a8a8;border-radius:1.5px"></div>
<svg style="left:41px;top:240px" width="11" height="11" viewBox="0 0 11 11"><path d="M0.6 5.5H10.1M5.5 1V10" stroke="#484848" stroke-width="1" fill="none"/></svg>
<div style="left:64px;top:238px;width:11px;height:11px;background:#fff;border:1px solid #939393"></div>
<div style="left:88.5px;top:236.5px;width:40.0px;height:14px;background:#fff;border:1px solid #b6b6b6;border-bottom-color:#a8a8a8;border-radius:1.5px"></div>
<div style="left:185px;top:236.5px;width:52.5px;height:14px;background:#fff;border:1px solid #b6b6b6;border-bottom-color:#a8a8a8;border-radius:1.5px"></div>
<div style="left:245.5px;top:236.5px;width:40.0px;height:14px;background:#fff;border:1px solid #b6b6b6;border-bottom-color:#a8a8a8;border-radius:1.5px"></div>
<svg style="left:41px;top:258px" width="11" height="11" viewBox="0 0 11 11"><path d="M0.6 5.5H10.1M5.5 1V10" stroke="#484848" stroke-width="1" fill="none"/></svg>
<div style="left:64px;top:256px;width:11px;height:11px;background:#fff;border:1px solid #939393"></div>
<div style="left:88.5px;top:255.0px;width:40.0px;height:14px;background:#fff;border:1px solid #b6b6b6;border-bottom-color:#a8a8a8;border-radius:1.5px"></div>
<div style="left:185px;top:255.0px;width:52.5px;height:14px;background:#fff;border:1px solid #b6b6b6;border-bottom-color:#a8a8a8;border-radius:1.5px"></div>
<div style="left:245.5px;top:255.0px;width:40.0px;height:14px;background:#fff;border:1px solid #b6b6b6;border-bottom-color:#a8a8a8;border-radius:1.5px"></div>
<svg style="left:41px;top:277px" width="11" height="11" viewBox="0 0 11 11"><path d="M0.6 5.5H10.1M5.5 1V10" stroke="#484848" stroke-width="1" fill="none"/></svg>
<div style="left:64px;top:275px;width:11px;height:11px;background:#fff;border:1px solid #939393"></div>
<div style="left:88.5px;top:273.5px;width:40.0px;height:14px;background:#fff;border:1px solid #b6b6b6;border-bottom-color:#a8a8a8;border-radius:1.5px"></div>
<div style="left:185px;top:273.5px;width:52.5px;height:14px;background:#fff;border:1px solid #b6b6b6;border-bottom-color:#a8a8a8;border-radius:1.5px"></div>
<div style="left:245.5px;top:273.5px;width:40.0px;height:14px;background:#fff;border:1px solid #b6b6b6;border-bottom-color:#a8a8a8;border-radius:1.5px"></div>
<svg style="left:41px;top:295px" width="11" height="11" viewBox="0 0 11 11"><path d="M0.6 5.5H10.1M5.5 1V10" stroke="#484848" stroke-width="1" fill="none"/></svg>
<div style="left:64px;top:294px;width:11px;height:11px;background:#fff;border:1px solid #939393"></div>
<div style="left:88.5px;top:292.0px;width:40.0px;height:14px;background:#fff;border:1px solid #b6b6b6;border-bottom-color:#a8a8a8;border-radius:1.5px"></div>
<div style="left:185px;top:292.0px;width:52.5px;height:14px;background:#fff;border:1px solid #b6b6b6;border-bottom-color:#a8a8a8;border-radius:1.5px"></div>
<div style="left:245.5px;top:292.0px;width:40.0px;height:14px;background:#fff;border:1px solid #b6b6b6;border-bottom-color:#a8a8a8;border-radius:1.5px"></div>
<svg style="left:41px;top:314px" width="11" height="11" viewBox="0 0 11 11"><path d="M0.6 5.5H10.1M5.5 1V10" stroke="#484848" stroke-width="1" fill="none"/></svg>
<div style="left:64px;top:312px;width:11px;height:11px;background:#fff;border:1px solid #939393"></div>
<div style="left:88.5px;top:310.5px;width:40.0px;height:14px;background:#fff;border:1px solid #b6b6b6;border-bottom-color:#a8a8a8;border-radius:1.5px"></div>
<div style="left:185px;top:310.5px;width:52.5px;height:14px;background:#fff;border:1px solid #b6b6b6;border-bottom-color:#a8a8a8;border-radius:1.5px"></div>
<div style="left:245.5px;top:310.5px;width:40.0px;height:14px;background:#fff;border:1px solid #b6b6b6;border-bottom-color:#a8a8a8;border-radius:1.5px"></div>
<svg style="left:41px;top:332px" width="11" height="11" viewBox="0 0 11 11"><path d="M0.6 5.5H10.1M5.5 1V10" stroke="#484848" stroke-width="1" fill="none"/></svg>
<div style="left:64px;top:330px;width:11px;height:11px;background:#fff;border:1px solid #939393"></div>
<div style="left:88.5px;top:329.0px;width:40.0px;height:14px;background:#fff;border:1px solid #b6b6b6;border-bottom-color:#a8a8a8;border-radius:1.5px"></div>
<div style="left:185px;top:329.0px;width:52.5px;height:14px;background:#fff;border:1px solid #b6b6b6;border-bottom-color:#a8a8a8;border-radius:1.5px"></div>
<div style="left:245.5px;top:329.0px;width:40.0px;height:14px;background:#fff;border:1px solid #b6b6b6;border-bottom-color:#a8a8a8;border-radius:1.5px"></div>
<svg style="left:2px;top:501px" width="6" height="7" viewBox="0 0 6 7"><path d="M4.6 0.8L1.6 3.5L4.6 6.2" fill="none" stroke="#7c7c7c" stroke-width="1.1"/></svg>
<svg style="left:1527px;top:501px" width="6" height="7" viewBox="0 0 6 7"><path d="M1.4 0.8L4.4 3.5L1.4 6.2" fill="none" stroke="#7c7c7c" stroke-width="1.1"/></svg>
<div style="left:1px;top:22.5px;width:84px;height:19px;border:1px solid #c9cdd4;border-radius:2.5px;background:linear-gradient(#f7f9fb,#e4e7ec)"></div>
<div style="left:1275px;top:22.5px;width:81px;height:18px;border:1px solid #7a7a7a;border-radius:1.5px;background:#fff"></div>
<svg style="left:1345px;top:29px" width="9" height="6" viewBox="0 0 9 6"><path d="M1.2 1.4L4.5 4.6L7.8 1.4" fill="none" stroke="#3a3a3a" stroke-width="1.2"/></svg>
<div style="left:1364.5px;top:22.5px;width:89px;height:19px;border:1px solid #c9cdd4;border-radius:2.5px;background:linear-gradient(#f7f9fb,#e4e7ec)"></div>
<div style="left:1460px;top:22.5px;width:71px;height:19px;border:1px solid #c9cdd4;border-radius:2.5px;background:linear-gradient(#f7f9fb,#e4e7ec)"></div>
<svg style="left:68px;top:52px" width="10" height="15" viewBox="0 0 10 15"><path d="M5.1 13.8V1.4M2 4.6L5.1 1.4L8.3 4.6" fill="none" stroke="#333" stroke-width="1"/></svg>
<svg style="left:82px;top:55px" width="11" height="10" viewBox="0 0 11 10"><path d="M1.1 1L9.6 9M9.6 1L1.1 9" fill="none" stroke="#333" stroke-width="1"/></svg>
<svg style="left:752px;top:92px" width="10" height="14" viewBox="0 0 10 14"><path d="M4.9 13.4V1M2 4.1L4.9 1L8 4.1" fill="none" stroke="#333" stroke-width="1"/></svg>
<span class="tab" style="left:4px;top:4px;transform:translateX(0.88px) scaleX(0.9569)">Portfolio</span>
<span class="tab" style="left:58px;top:4px;transform:translateX(0.58px) scaleX(0.9564)">Strategies</span>
<span class="tab" style="left:124px;top:4px;transform:translateX(0.95px) scaleX(0.8489)">Legs</span>
<span class="tab" style="left:166px;top:4px;transform:translateX(0.13px) scaleX(0.9666)">A/C Management</span>
<span class="g" style="left:26px;top:52px;transform:translateX(0.40px) scaleX(0.9189)">Status</span>
<span class="h" style="left:303px;top:91px;transform:translateX(0.37px) scaleX(0.9679)">Portfolio Name</span>
<span class="h" style="left:415px;top:91px;transform:translateX(0.12px) scaleX(0.9744)">A/C Name</span>
<span class="h" style="left:503px;top:91px;transform:translateX(0.88px) scaleX(0.9514)">Index</span>
<span class="h" style="left:571px;top:91px;transform:translateX(0.46px) scaleX(0.9299)">Underlying</span>
<span class="h" style="left:667px;top:91px;transform:translateX(0.98px) scaleX(0.8827)">UL LTP</span>
<span class="h" style="left:720px;top:91px;transform:translateX(0.09px) scaleX(0.9276)">Status</span>
<span class="h" style="left:800px;top:91px;transform:translateX(0.93px) scaleX(0.8777)">PNL</span>
<span class="h" style="left:920px;top:91px;transform:translateX(0.41px) scaleX(0.9164)">Leg Status</span>
<span class="h" style="left:1085px;top:91px;transform:translateX(0.40px) scaleX(0.9314)">Entry Time</span>
<span class="h" style="left:1175px;top:91px;transform:translateX(0.42px) scaleX(0.9039)">Entry Price</span>
<span class="h" style="left:1266px;top:104px;transform:translateX(0.44px) scaleX(0.8640)">LTP</span>
<span class="h" style="left:1325px;top:104px;transform:translateX(0.39px) scaleX(0.8637)">Trail SL</span>
<span class="h" style="left:1399px;top:104px;transform:translateX(0.89px) scaleX(0.8924)">Trail X</span>
<span class="h" style="left:1471px;top:104px;transform:translateX(0.39px) scaleX(0.8942)">Trail Y</span>
<span class="h" style="left:1430px;top:79px;transform:translateX(0.60px) scaleX(0.9437)">Combined</span>
<span class="g" style="left:50px;top:127px;transform:translateX(0.92px) scaleX(0.8828)">Status : EXITED - 2 Items</span>
<span class="rn" style="left:2px;top:145px;transform:translateX(0.86px) scaleX(0.9625)">1</span>
<span class="gbd" style="left:100px;top:144px;transform:translateX(0.86px) scaleX(0.9420)">Exit</span>
<span class="gbd" style="left:142px;top:144px;transform:translateX(0.28px) scaleX(0.9917)">Delete</span>
<span class="gbd" style="left:188px;top:144px;transform:translateX(0.01px) scaleX(1.0431)">Part Book</span>
<span class="gb" style="left:248px;top:144px;transform:translateX(0.57px) scaleX(1.0503)">Update</span>
<span class="d" style="left:292px;top:145px;transform:translateX(0.80px) scaleX(0.9510)">S5</span>
<span class="d" style="left:405px;top:145px;transform:translateX(0.55px) scaleX(0.9627)">1825693</span>
<span class="d" style="left:494px;top:145px;transform:translateX(0.04px) scaleX(0.9492)">NIFTY</span>
<span class="d" style="left:560px;top:145px;transform:translateX(0.43px) scaleX(0.9272)">SPOT</span>
<span class="d" style="left:653px;top:145px;transform:translateX(0.47px) scaleX(0.9924)">24,576.80</span>
<span class="d" style="left:716px;top:145px;transform:translateX(0.09px) scaleX(0.9137)">EXITED</span>
<span class="d" style="left:787px;top:145px;transform:translateX(0.02px) scaleX(0.9137)">-123.75</span>
<span class="d" style="left:836px;top:145px;transform:translateX(0.02px) scaleX(0.9849)">RUN: 0, PEN: 0, EXT: 8, ERR: 0, CAN: 0, WNT: 0</span>
<span class="d" style="left:1074px;top:145px;transform:translateX(0.86px) scaleX(0.8759)">11:27:12</span>
<span class="d" style="left:1166px;top:145px;transform:translateX(0.08px) scaleX(0.9362)">0.00</span>
<span class="d" style="left:1256px;top:145px;transform:translateX(0.94px) scaleX(0.9523)">319.45</span>
<span class="d" style="left:1315px;top:145px;transform:translateX(0.08px) scaleX(0.9362)">0.00</span>
<span class="d" style="left:1390px;top:145px;transform:translateX(0.08px) scaleX(0.9362)">0.00</span>
<span class="d" style="left:1461px;top:145px;transform:translateX(0.08px) scaleX(0.9362)">0.00</span>
<span class="d" style="left:1531px;top:145px;transform:translateX(0.08px) scaleX(0.9362)">0.00</span>
<span class="rn" style="left:3px;top:164px;transform:translateX(0.49px) scaleX(0.9625)">2</span>
<span class="gbd" style="left:100px;top:163px;transform:translateX(0.86px) scaleX(0.9420)">Exit</span>
<span class="gbd" style="left:142px;top:163px;transform:translateX(0.28px) scaleX(0.9917)">Delete</span>
<span class="gbd" style="left:188px;top:163px;transform:translateX(0.01px) scaleX(1.0431)">Part Book</span>
<span class="gb" style="left:248px;top:163px;transform:translateX(0.57px) scaleX(1.0503)">Update</span>
<span class="d" style="left:292px;top:164px;transform:translateX(0.80px) scaleX(0.9533)">S2</span>
<span class="d" style="left:405px;top:164px;transform:translateX(0.55px) scaleX(0.9627)">1825693</span>
<span class="d" style="left:494px;top:164px;transform:translateX(0.04px) scaleX(0.9492)">NIFTY</span>
<span class="d" style="left:560px;top:164px;transform:translateX(0.43px) scaleX(0.9272)">SPOT</span>
<span class="d" style="left:653px;top:164px;transform:translateX(0.47px) scaleX(0.9924)">24,576.80</span>
<span class="d" style="left:716px;top:164px;transform:translateX(0.09px) scaleX(0.9137)">EXITED</span>
<span class="d" style="left:786px;top:164px;transform:translateX(0.99px) scaleX(0.9600)">-33.75</span>
<span class="d" style="left:836px;top:164px;transform:translateX(0.02px) scaleX(0.9849)">RUN: 0, PEN: 0, EXT: 8, ERR: 0, CAN: 0, WNT: 0</span>
<span class="d" style="left:1074px;top:164px;transform:translateX(0.86px) scaleX(0.8721)">11:27:10</span>
<span class="d" style="left:1166px;top:164px;transform:translateX(0.08px) scaleX(0.9362)">0.00</span>
<span class="d" style="left:1256px;top:164px;transform:translateX(0.95px) scaleX(0.9353)">319.50</span>
<span class="d" style="left:1315px;top:164px;transform:translateX(0.08px) scaleX(0.9362)">0.00</span>
<span class="d" style="left:1390px;top:164px;transform:translateX(0.08px) scaleX(0.9362)">0.00</span>
<span class="d" style="left:1461px;top:164px;transform:translateX(0.08px) scaleX(0.9362)">0.00</span>
<span class="d" style="left:1531px;top:164px;transform:translateX(0.08px) scaleX(0.9362)">0.00</span>
<span class="g" style="left:50px;top:182px;transform:translateX(0.99px) scaleX(0.9623)">Group Total PNL : -157.50</span>
<span class="g" style="left:50px;top:201px;transform:translateX(0.90px) scaleX(0.9186)">Status : RUNNING - 7 Items</span>
<span class="rn" style="left:3px;top:219px;transform:translateX(0.43px) scaleX(0.9625)">3</span>
<span class="gb" style="left:100px;top:218px;transform:translateX(0.86px) scaleX(0.9420)">Exit</span>
<span class="gbd" style="left:142px;top:218px;transform:translateX(0.28px) scaleX(0.9917)">Delete</span>
<span class="gb" style="left:188px;top:218px;transform:translateX(0.01px) scaleX(1.0431)">Part Book</span>
<span class="gb" style="left:248px;top:218px;transform:translateX(0.57px) scaleX(1.0503)">Update</span>
<span class="d" style="left:292px;top:219px;transform:translateX(0.80px) scaleX(0.9506)">S8</span>
<span class="d" style="left:405px;top:219px;transform:translateX(0.55px) scaleX(0.9627)">1825693</span>
<span class="d" style="left:494px;top:219px;transform:translateX(0.04px) scaleX(0.9492)">NIFTY</span>
<span class="d" style="left:560px;top:219px;transform:translateX(0.43px) scaleX(0.9272)">SPOT</span>
<span class="d" style="left:653px;top:219px;transform:translateX(0.47px) scaleX(0.9924)">24,576.80</span>
<span class="d" style="left:715px;top:219px;transform:translateX(0.98px) scaleX(1.0241)">RUNNING</span>
<span class="d" style="left:786px;top:219px;transform:translateX(0.99px) scaleX(0.9629)">-37.50</span>
<span class="d" style="left:836px;top:219px;transform:translateX(0.02px) scaleX(0.9849)">RUN: 8, PEN: 0, EXT: 0, ERR: 0, CAN: 0, WNT: 0</span>
<span class="d" style="left:1074px;top:219px;transform:translateX(0.87px) scaleX(0.8674)">11:27:14</span>
<span class="d" style="left:1166px;top:219px;transform:translateX(0.08px) scaleX(0.9362)">0.00</span>
<span class="d" style="left:1256px;top:219px;transform:translateX(0.93px) scaleX(0.9718)">329.70</span>
<span class="d" style="left:1315px;top:219px;transform:translateX(0.08px) scaleX(0.9362)">0.00</span>
<span class="d" style="left:1390px;top:219px;transform:translateX(0.08px) scaleX(0.9362)">0.00</span>
<span class="d" style="left:1461px;top:219px;transform:translateX(0.08px) scaleX(0.9362)">0.00</span>
<span class="d" style="left:1531px;top:219px;transform:translateX(0.08px) scaleX(0.9362)">0.00</span>
<span class="rn" style="left:3px;top:238px;transform:translateX(0.77px) scaleX(0.9625)">4</span>
<span class="gb" style="left:100px;top:237px;transform:translateX(0.86px) scaleX(0.9420)">Exit</span>
<span class="gbd" style="left:142px;top:237px;transform:translateX(0.28px) scaleX(0.9917)">Delete</span>
<span class="gb" style="left:188px;top:237px;transform:translateX(0.01px) scaleX(1.0431)">Part Book</span>
<span class="gb" style="left:248px;top:237px;transform:translateX(0.57px) scaleX(1.0503)">Update</span>
<span class="d" style="left:292px;top:238px;transform:translateX(0.81px) scaleX(0.9421)">S9</span>
<span class="d" style="left:405px;top:238px;transform:translateX(0.55px) scaleX(0.9627)">1825693</span>
<span class="d" style="left:494px;top:238px;transform:translateX(0.04px) scaleX(0.9492)">NIFTY</span>
<span class="d" style="left:560px;top:238px;transform:translateX(0.43px) scaleX(0.9272)">SPOT</span>
<span class="d" style="left:653px;top:238px;transform:translateX(0.47px) scaleX(0.9924)">24,576.80</span>
<span class="d" style="left:715px;top:238px;transform:translateX(0.98px) scaleX(1.0241)">RUNNING</span>
<span class="d" style="left:787px;top:238px;transform:translateX(0.01px) scaleX(0.9315)">-41.25</span>
<span class="d" style="left:836px;top:238px;transform:translateX(0.02px) scaleX(0.9849)">RUN: 8, PEN: 0, EXT: 0, ERR: 0, CAN: 0, WNT: 0</span>
<span class="d" style="left:1074px;top:238px;transform:translateX(0.86px) scaleX(0.8726)">11:27:15</span>
<span class="d" style="left:1166px;top:238px;transform:translateX(0.08px) scaleX(0.9362)">0.00</span>
<span class="d" style="left:1256px;top:238px;transform:translateX(0.93px) scaleX(0.9718)">329.70</span>
<span class="d" style="left:1315px;top:238px;transform:translateX(0.08px) scaleX(0.9362)">0.00</span>
<span class="d" style="left:1390px;top:238px;transform:translateX(0.08px) scaleX(0.9362)">0.00</span>
<span class="d" style="left:1461px;top:238px;transform:translateX(0.08px) scaleX(0.9362)">0.00</span>
<span class="d" style="left:1531px;top:238px;transform:translateX(0.08px) scaleX(0.9362)">0.00</span>
<span class="rn" style="left:3px;top:256px;transform:translateX(0.42px) scaleX(0.9625)">5</span>
<span class="gb" style="left:100px;top:255px;transform:translateX(0.86px) scaleX(0.9420)">Exit</span>
<span class="gbd" style="left:142px;top:255px;transform:translateX(0.28px) scaleX(0.9917)">Delete</span>
<span class="gb" style="left:188px;top:255px;transform:translateX(0.01px) scaleX(1.0431)">Part Book</span>
<span class="gb" style="left:248px;top:255px;transform:translateX(0.57px) scaleX(1.0503)">Update</span>
<span class="d" style="left:292px;top:256px;transform:translateX(0.82px) scaleX(0.9317)">S4</span>
<span class="d" style="left:405px;top:256px;transform:translateX(0.55px) scaleX(0.9627)">1825693</span>
<span class="d" style="left:494px;top:256px;transform:translateX(0.04px) scaleX(0.9492)">NIFTY</span>
<span class="d" style="left:560px;top:256px;transform:translateX(0.43px) scaleX(0.9272)">SPOT</span>
<span class="d" style="left:653px;top:256px;transform:translateX(0.47px) scaleX(0.9924)">24,576.80</span>
<span class="d" style="left:715px;top:256px;transform:translateX(0.98px) scaleX(1.0241)">RUNNING</span>
<span class="d" style="left:786px;top:256px;transform:translateX(0.97px) scaleX(0.9950)">-45.00</span>
<span class="d" style="left:836px;top:256px;transform:translateX(0.02px) scaleX(0.9849)">RUN: 8, PEN: 0, EXT: 0, ERR: 0, CAN: 0, WNT: 0</span>
<span class="d" style="left:1074px;top:256px;transform:translateX(0.88px) scaleX(0.8539)">11:27:11</span>
<span class="d" style="left:1166px;top:256px;transform:translateX(0.08px) scaleX(0.9362)">0.00</span>
<span class="d" style="left:1256px;top:256px;transform:translateX(0.95px) scaleX(0.9353)">319.30</span>
<span class="d" style="left:1315px;top:256px;transform:translateX(0.08px) scaleX(0.9362)">0.00</span>
<span class="d" style="left:1390px;top:256px;transform:translateX(0.08px) scaleX(0.9362)">0.00</span>
<span class="d" style="left:1461px;top:256px;transform:translateX(0.08px) scaleX(0.9362)">0.00</span>
<span class="d" style="left:1531px;top:256px;transform:translateX(0.08px) scaleX(0.9362)">0.00</span>
<span class="rn" style="left:3px;top:275px;transform:translateX(0.49px) scaleX(0.9625)">6</span>
<span class="gb" style="left:100px;top:274px;transform:translateX(0.86px) scaleX(0.9420)">Exit</span>
<span class="gbd" style="left:142px;top:274px;transform:translateX(0.28px) scaleX(0.9917)">Delete</span>
<span class="gb" style="left:188px;top:274px;transform:translateX(0.01px) scaleX(1.0431)">Part Book</span>
<span class="gb" style="left:248px;top:274px;transform:translateX(0.57px) scaleX(1.0503)">Update</span>
<span class="d" style="left:292px;top:275px;transform:translateX(0.80px) scaleX(0.9506)">S3</span>
<span class="d" style="left:405px;top:275px;transform:translateX(0.55px) scaleX(0.9627)">1825693</span>
<span class="d" style="left:494px;top:275px;transform:translateX(0.04px) scaleX(0.9492)">NIFTY</span>
<span class="d" style="left:560px;top:275px;transform:translateX(0.43px) scaleX(0.9272)">SPOT</span>
<span class="d" style="left:653px;top:275px;transform:translateX(0.47px) scaleX(0.9924)">24,576.80</span>
<span class="d" style="left:715px;top:275px;transform:translateX(0.98px) scaleX(1.0241)">RUNNING</span>
<span class="d" style="left:786px;top:275px;transform:translateX(0.98px) scaleX(0.9779)">-86.25</span>
<span class="d" style="left:836px;top:275px;transform:translateX(0.02px) scaleX(0.9849)">RUN: 8, PEN: 0, EXT: 0, ERR: 0, CAN: 0, WNT: 0</span>
<span class="d" style="left:1074px;top:275px;transform:translateX(0.88px) scaleX(0.8539)">11:27:11</span>
<span class="d" style="left:1166px;top:275px;transform:translateX(0.08px) scaleX(0.9362)">0.00</span>
<span class="d" style="left:1256px;top:275px;transform:translateX(0.95px) scaleX(0.9353)">319.30</span>
<span class="d" style="left:1315px;top:275px;transform:translateX(0.08px) scaleX(0.9362)">0.00</span>
<span class="d" style="left:1390px;top:275px;transform:translateX(0.08px) scaleX(0.9362)">0.00</span>
<span class="d" style="left:1461px;top:275px;transform:translateX(0.08px) scaleX(0.9362)">0.00</span>
<span class="d" style="left:1531px;top:275px;transform:translateX(0.08px) scaleX(0.9362)">0.00</span>
<span class="rn" style="left:3px;top:293px;transform:translateX(0.40px) scaleX(0.9625)">7</span>
<span class="gb" style="left:100px;top:292px;transform:translateX(0.86px) scaleX(0.9420)">Exit</span>
<span class="gbd" style="left:142px;top:292px;transform:translateX(0.28px) scaleX(0.9917)">Delete</span>
<span class="gb" style="left:188px;top:292px;transform:translateX(0.01px) scaleX(1.0431)">Part Book</span>
<span class="gb" style="left:248px;top:292px;transform:translateX(0.57px) scaleX(1.0503)">Update</span>
<span class="d" style="left:292px;top:293px;transform:translateX(0.80px) scaleX(0.9513)">S6</span>
<span class="d" style="left:405px;top:293px;transform:translateX(0.55px) scaleX(0.9627)">1825693</span>
<span class="d" style="left:494px;top:293px;transform:translateX(0.04px) scaleX(0.9492)">NIFTY</span>
<span class="d" style="left:560px;top:293px;transform:translateX(0.43px) scaleX(0.9272)">SPOT</span>
<span class="d" style="left:653px;top:293px;transform:translateX(0.47px) scaleX(0.9924)">24,576.80</span>
<span class="d" style="left:715px;top:293px;transform:translateX(0.98px) scaleX(1.0241)">RUNNING</span>
<span class="d" style="left:787px;top:293px;transform:translateX(0.00px) scaleX(0.9422)">-71.25</span>
<span class="d" style="left:836px;top:293px;transform:translateX(0.02px) scaleX(0.9849)">RUN: 8, PEN: 0, EXT: 0, ERR: 0, CAN: 0, WNT: 0</span>
<span class="d" style="left:1074px;top:293px;transform:translateX(0.86px) scaleX(0.8729)">11:27:16</span>
<span class="d" style="left:1166px;top:293px;transform:translateX(0.08px) scaleX(0.9362)">0.00</span>
<span class="d" style="left:1256px;top:293px;transform:translateX(0.93px) scaleX(0.9718)">329.70</span>
<span class="d" style="left:1315px;top:293px;transform:translateX(0.08px) scaleX(0.9362)">0.00</span>
<span class="d" style="left:1390px;top:293px;transform:translateX(0.08px) scaleX(0.9362)">0.00</span>
<span class="d" style="left:1461px;top:293px;transform:translateX(0.08px) scaleX(0.9362)">0.00</span>
<span class="d" style="left:1531px;top:293px;transform:translateX(0.08px) scaleX(0.9362)">0.00</span>
<span class="rn" style="left:3px;top:312px;transform:translateX(0.53px) scaleX(0.9625)">8</span>
<span class="gb" style="left:100px;top:311px;transform:translateX(0.86px) scaleX(0.9420)">Exit</span>
<span class="gbd" style="left:142px;top:311px;transform:translateX(0.28px) scaleX(0.9917)">Delete</span>
<span class="gb" style="left:188px;top:311px;transform:translateX(0.01px) scaleX(1.0431)">Part Book</span>
<span class="gb" style="left:248px;top:311px;transform:translateX(0.57px) scaleX(1.0503)">Update</span>
<span class="d" style="left:292px;top:312px;transform:translateX(0.81px) scaleX(0.9394)">S7</span>
<span class="d" style="left:405px;top:312px;transform:translateX(0.55px) scaleX(0.9627)">1825693</span>
<span class="d" style="left:494px;top:312px;transform:translateX(0.04px) scaleX(0.9492)">NIFTY</span>
<span class="d" style="left:560px;top:312px;transform:translateX(0.43px) scaleX(0.9272)">SPOT</span>
<span class="d" style="left:653px;top:312px;transform:translateX(0.47px) scaleX(0.9924)">24,576.80</span>
<span class="d" style="left:715px;top:312px;transform:translateX(0.98px) scaleX(1.0241)">RUNNING</span>
<span class="d" style="left:786px;top:312px;transform:translateX(0.57px) scaleX(0.9467)">0.00</span>
<span class="d" style="left:836px;top:312px;transform:translateX(0.02px) scaleX(0.9849)">RUN: 8, PEN: 0, EXT: 0, ERR: 0, CAN: 0, WNT: 0</span>
<span class="d" style="left:1074px;top:312px;transform:translateX(0.87px) scaleX(0.8674)">11:27:14</span>
<span class="d" style="left:1166px;top:312px;transform:translateX(0.08px) scaleX(0.9362)">0.00</span>
<span class="d" style="left:1256px;top:312px;transform:translateX(0.93px) scaleX(0.9718)">329.70</span>
<span class="d" style="left:1315px;top:312px;transform:translateX(0.08px) scaleX(0.9362)">0.00</span>
<span class="d" style="left:1390px;top:312px;transform:translateX(0.08px) scaleX(0.9362)">0.00</span>
<span class="d" style="left:1461px;top:312px;transform:translateX(0.08px) scaleX(0.9362)">0.00</span>
<span class="d" style="left:1531px;top:312px;transform:translateX(0.08px) scaleX(0.9362)">0.00</span>
<span class="rn" style="left:3px;top:330px;transform:translateX(0.48px) scaleX(0.9625)">9</span>
<span class="gb" style="left:100px;top:329px;transform:translateX(0.86px) scaleX(0.9420)">Exit</span>
<span class="gbd" style="left:142px;top:329px;transform:translateX(0.28px) scaleX(0.9917)">Delete</span>
<span class="gb" style="left:188px;top:329px;transform:translateX(0.01px) scaleX(1.0431)">Part Book</span>
<span class="gb" style="left:248px;top:329px;transform:translateX(0.57px) scaleX(1.0503)">Update</span>
<span class="d" style="left:292px;top:330px;transform:translateX(0.89px) scaleX(0.8698)">S1</span>
<span class="d" style="left:405px;top:330px;transform:translateX(0.55px) scaleX(0.9627)">1825693</span>
<span class="d" style="left:494px;top:330px;transform:translateX(0.04px) scaleX(0.9492)">NIFTY</span>
<span class="d" style="left:560px;top:330px;transform:translateX(0.43px) scaleX(0.9272)">SPOT</span>
<span class="d" style="left:653px;top:330px;transform:translateX(0.47px) scaleX(0.9924)">24,576.80</span>
<span class="d" style="left:715px;top:330px;transform:translateX(0.98px) scaleX(1.0241)">RUNNING</span>
<span class="d" style="left:786px;top:330px;transform:translateX(0.98px) scaleX(0.9779)">-56.25</span>
<span class="d" style="left:836px;top:330px;transform:translateX(0.02px) scaleX(0.9849)">RUN: 8, PEN: 0, EXT: 0, ERR: 0, CAN: 0, WNT: 0</span>
<span class="d" style="left:1074px;top:330px;transform:translateX(0.80px) scaleX(0.9213)">11:27:09</span>
<span class="d" style="left:1166px;top:330px;transform:translateX(0.08px) scaleX(0.9362)">0.00</span>
<span class="d" style="left:1256px;top:330px;transform:translateX(0.93px) scaleX(0.9718)">329.70</span>
<span class="d" style="left:1315px;top:330px;transform:translateX(0.08px) scaleX(0.9362)">0.00</span>
<span class="d" style="left:1390px;top:330px;transform:translateX(0.08px) scaleX(0.9362)">0.00</span>
<span class="d" style="left:1461px;top:330px;transform:translateX(0.08px) scaleX(0.9362)">0.00</span>
<span class="d" style="left:1531px;top:330px;transform:translateX(0.08px) scaleX(0.9362)">0.00</span>
<span class="g" style="left:50px;top:349px;transform:translateX(0.99px) scaleX(0.9623)">Group Total PNL : -337.50</span>
<span class="g" style="left:51px;top:367px;transform:translateX(0.11px) scaleX(0.9649)">Total PNL : -495.00</span>
<span class="btn" style="left:14px;top:24px;transform:translateX(0.09px) scaleX(1.0114)">Exit Selected</span>
<span class="tb" style="left:93px;top:26px;transform:translateX(0.92px) scaleX(0.9817)">RUNNING :-  7</span>
<span class="tb" style="left:194px;top:26px;transform:translateX(0.93px) scaleX(0.9671)">PENDING :-  0</span>
<span class="tb" style="left:301px;top:26px;transform:translateX(0.95px) scaleX(0.9461)">EXITED :-  2</span>
<span class="tb" style="left:393px;top:26px;transform:translateX(0.96px) scaleX(0.9441)">ERROR :- 0</span>
<span class="tb" style="left:482px;top:26px;transform:translateX(0.76px) scaleX(0.9889)">WAIT :-  0</span>
<span class="tb" style="left:565px;top:26px;transform:translateX(0.27px) scaleX(0.9622)">WAITNTRADE :-  0</span>
<span class="tb" style="left:677px;top:26px;transform:translateX(0.95px) scaleX(0.9506)">RE-ENTRY WAIT :-  0</span>
<span class="btn" style="left:1281px;top:24px;transform:translateX(0.58px) scaleX(0.9249)">Portfolio  N...</span>
<span class="btn" style="left:1368px;top:24px;transform:translateX(0.75px) scaleX(0.9738)">Auto Size Column</span>
<span class="btn" style="left:1471px;top:24px;transform:translateX(0.52px) scaleX(0.9807)">Reset View</span>
</body></html>
